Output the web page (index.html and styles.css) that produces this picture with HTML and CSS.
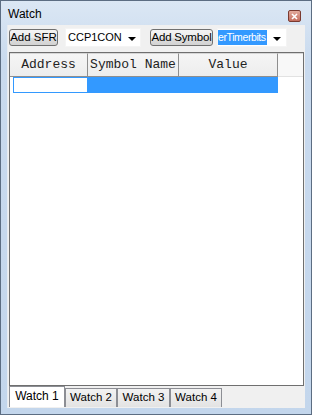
FILE: index.html
```html
<!DOCTYPE html>
<html lang="en">
<head>
  <meta charset="UTF-8">
  <meta name="viewport" content="width=device-width, initial-scale=1.0">
  <title>Watch</title>
  <link rel="stylesheet" href="styles.css">
</head>
<body>
  <div class="window">
    <div class="titlebar">
      <span class="title">Watch</span>
      <span class="close">
        <svg width="7" height="7" viewBox="0 0 7 7">
          <path d="M1 1 L6 6 M6 1 L1 6" stroke="#fff" stroke-width="1.6" fill="none"/>
        </svg>
      </span>
    </div>

    <div class="client">
      <!-- toolbar -->
      <div class="toolbar">
        <button class="btn btn-sfr">Add SFR</button>
        <div class="combo combo-sfr">
          <span class="combo-text">CCP1CON</span>
          <span class="arrow"></span>
        </div>
        <button class="btn btn-sym">Add Symbol</button>
        <div class="combo combo-sym">
          <span class="combo-text sel">erTimerbits</span>
          <span class="arrow"></span>
        </div>
      </div>

      <!-- watch list -->
      <div class="list">
        <div class="list-head">
          <div class="col col-addr">Address</div>
          <div class="col col-sym">Symbol Name</div>
          <div class="col col-val">Value</div>
          <div class="col col-fill"></div>
        </div>
        <div class="row">
          <div class="cell cell-addr"></div>
          <div class="cell cell-sel"></div>
        </div>
      </div>

      <!-- tabs -->
      <div class="tabs">
        <div class="tab active t1">Watch 1</div>
        <div class="tab t2">Watch 2</div>
        <div class="tab t3">Watch 3</div>
        <div class="tab t4">Watch 4</div>
      </div>
    </div>
  </div>
</body>
</html>
```

FILE: styles.css
```css
* {
  box-sizing: border-box;
  margin: 0;
  padding: 0;
}

body {
  font-family: 'Liberation Sans', Arial, sans-serif;
  font-size: 11px;
  color: #000;
  background: #fff;
}

/* Window frame */
.window {
  width: 312px;
  height: 415px;
  border: 1px solid #5c6d82;
  background: linear-gradient(#dbe7f4, #c9daee 60px, #c3d6ec);
  padding: 0 6px 6px 6px;
  display: flex;
  flex-direction: column;
}

.titlebar {
  height: 24px;
  display: flex;
  justify-content: space-between;
  align-items: flex-start;
}

.title {
  font-size: 12px;
  padding-left: 1px;
  padding-top: 7px;
  line-height: 13px;
}

.close {
  width: 13px;
  height: 12px;
  margin-top: 9px;
  margin-right: 4px;
  border: 1px solid #7a3a30;
  border-radius: 2px;
  background: linear-gradient(#e2aa9c, #c46e5e);
  display: flex;
  align-items: center;
  justify-content: center;
}

.close svg {
  display: block;
}

/* Client area */
.client {
  flex: 1;
  background: #f0f0f0;
  display: flex;
  flex-direction: column;
  border-left: 1px solid #e6ebf1;
}

.toolbar {
  height: 27px;
  padding: 3px 0 0 1px;
  display: flex;
  align-items: flex-start;
}

.btn {
  height: 17px;
  margin-top: 1px;
  font-family: inherit;
  font-size: 11.5px;
  line-height: 15px;
  color: #000;
  border: 1px solid #707070;
  border-radius: 3px;
  background: linear-gradient(#f4f4f4, #ebebeb 50%, #dddddd 51%, #d3d3d3);
  text-align: center;
  white-space: nowrap;
  overflow: hidden;
}

.btn-sfr {
  width: 49px;
}

.btn-sym {
  width: 63px;
  margin-left: 9px;
  letter-spacing: -0.2px;
}

.combo {
  height: 19px;
  background: #fff;
  border: 1px solid #f4f4f4;
  display: flex;
  align-items: center;
  justify-content: space-between;
  overflow: hidden;
}

.combo-sfr {
  width: 76px;
  margin-left: 7px;
  padding: 0 4px 0 2px;
}

.combo-sym {
  width: 70px;
  margin-left: 4px;
  padding: 0 5px 0 0;
}

.combo-text {
  font-size: 11px;
  line-height: 15px;
}

.combo-text.sel {
  background: #3399ff;
  color: #fff;
  padding: 0 1px 0 0;
  font-size: 10.5px;
  letter-spacing: -0.4px;
}

.arrow {
  width: 0;
  height: 0;
  border-left: 4px solid transparent;
  border-right: 4px solid transparent;
  border-top: 4px solid #000;
  margin-top: 2px;
}

/* Watch list */
.list {
  height: 334px;
  margin: 0 1px;
  border: 1px solid #6f6f6f;
  background: #fff;
}

.list-head {
  display: flex;
  height: 24px;
}

.col {
  font-family: 'Liberation Mono', 'Courier New', monospace;
  font-size: 13px;
  line-height: 22px;
  color: #222;
  text-align: center;
  background: linear-gradient(#f5f5f5, #ededed);
  border-top: 1px solid #d6d6d6;
  border-right: 1px solid #8e8e8e;
  border-bottom: 1px solid #8e8e8e;
}

.col-addr {
  width: 78px;
}

.col-sym {
  width: 91px;
}

.col-val {
  width: 99px;
}

.col-fill {
  flex: 1;
  background: #f8f8f8;
  border-right: none;
  border-bottom: 1px solid #e2e2e2;
}

.row {
  display: flex;
  height: 16px;
}

.cell-addr {
  width: 75px;
  margin-left: 3px;
  border: 1px solid #3399ff;
  background: #fff;
}

.cell-sel {
  width: 190px;
  background: #3399ff;
}

/* Tabs */
.tabs {
  height: 22px;
  padding-left: 1px;
  display: flex;
  align-items: flex-end;
}

.tab {
  height: 19px;
  line-height: 17px;
  font-size: 11.5px;
  text-align: center;
  border: 1px solid #8c8e94;
  border-bottom: none;
  background: linear-gradient(#f2f2f2, #e3e3e3);
  margin-bottom: 1px;
}

.tab.active {
  height: 21px;
  line-height: 18px;
  background: #fff;
  font-size: 12px;
}

.t1 {
  width: 56px;
}

.t2 {
  width: 52px;
}

.t3 {
  width: 53px;
}

.t4 {
  width: 52px;
}
```
